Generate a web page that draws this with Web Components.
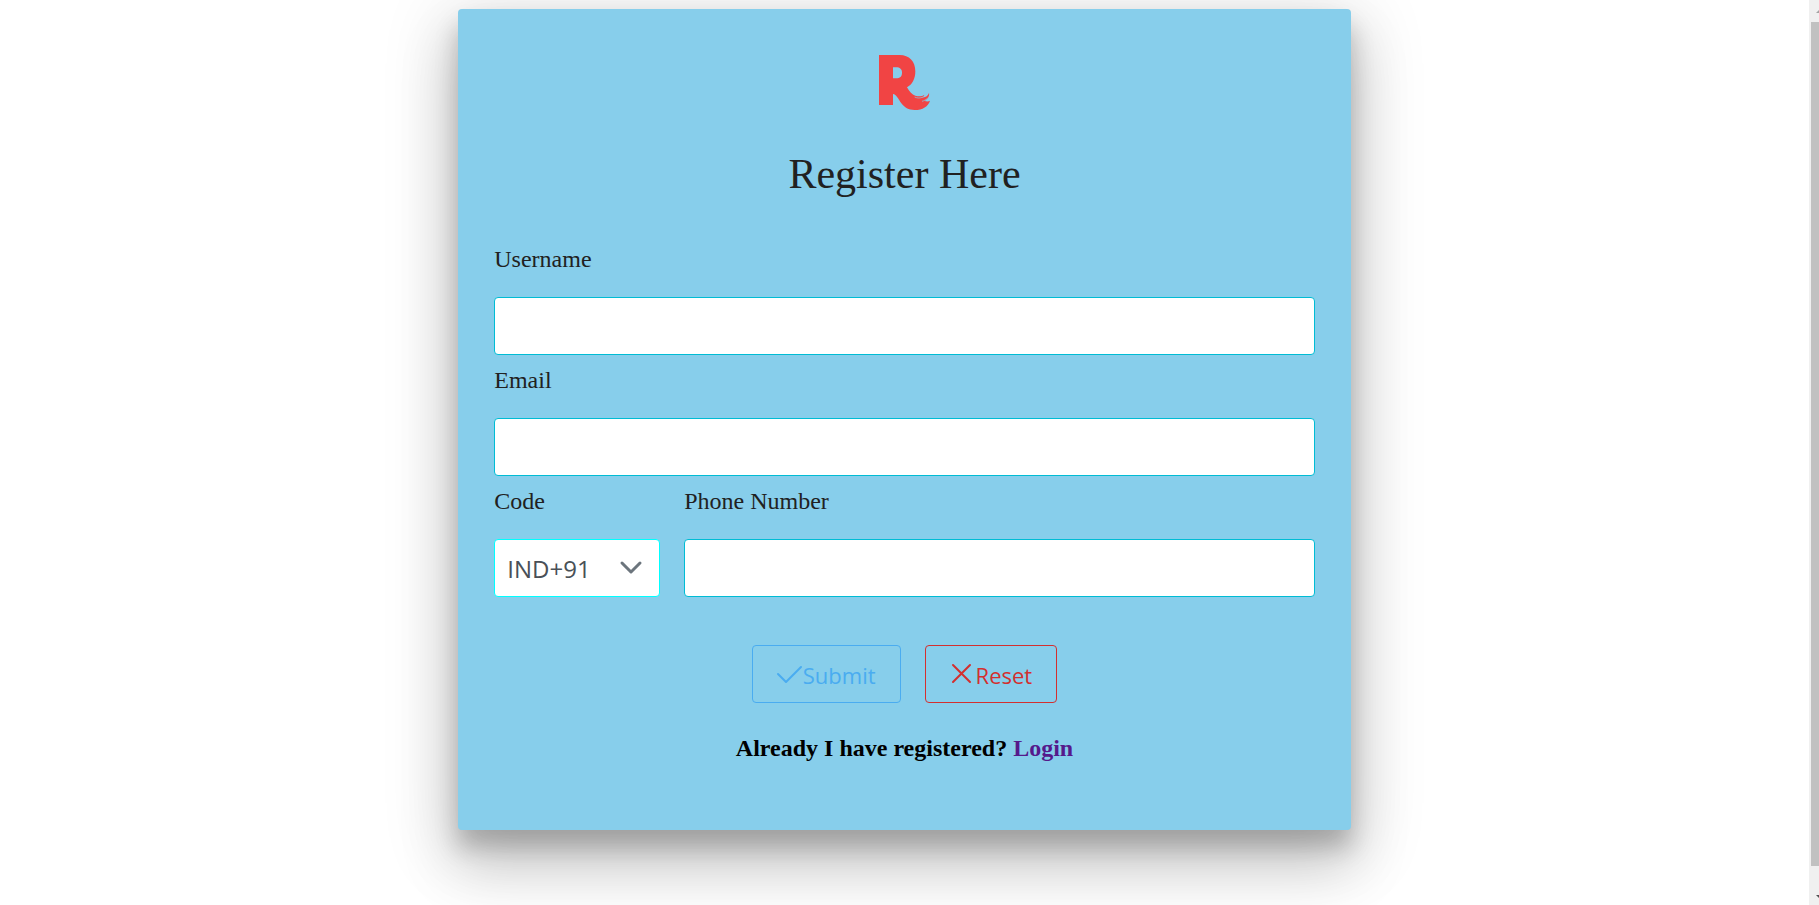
<!DOCTYPE html>
<html lang="en">
<head>
<meta charset="utf-8">
<title>Register</title>
<style>
body { margin: 0; background: #fff; font-family: "Liberation Serif", "Times New Roman", serif; }
</style>
</head>
<body>
<page-shell>
  <register-card heading="Register Here">
    <brand-logo slot="logo"></brand-logo>
    <text-field label="Username" type="text"></text-field>
    <text-field label="Email" type="email"></text-field>
    <field-row>
      <code-select label="Code"></code-select>
      <text-field label="Phone Number" type="tel"></text-field>
    </field-row>
    <action-button slot="actions" icon="check" disabled>Submit</action-button>
    <action-button slot="actions" icon="times">Reset</action-button>
    <login-prompt slot="footer"></login-prompt>
  </register-card>
</page-shell>
<script>
class BaseElement extends HTMLElement {
  connectedCallback() {
    if (this.shadowRoot) return;
    this.attachShadow({ mode: "open" }).innerHTML =
      `<style>:host,*{box-sizing:border-box}${this.styles()}</style>${this.markup()}`;
  }
}

const fieldStyles = `
  :host { display: block; min-width: 0; }
  label { display: block; margin-bottom: 24px; font-size: 24px; line-height: 27px; color: #212121; white-space: nowrap; }
  input, select { display: block; width: 100%; height: 58px; margin: 0; padding: 0 12px; border: 1px solid #00bcd4;
    border-radius: 4px; background: #fff; color: #495057; outline: none;
    font: 24px "Open Sans", "Noto Sans", sans-serif; }
`;

customElements.define("page-shell", class extends BaseElement {
  styles() { return `
    :host { display: flex; align-items: flex-start; }
    main { flex: 1; min-width: 0; min-height: 100vh; padding: 9px 12px 12px; overflow: hidden; }
  `; }
  markup() { return `<main><slot></slot></main><scroll-rail></scroll-rail>`; }
});

customElements.define("scroll-rail", class extends BaseElement {
  styles() { return `
    :host { display: flex; flex-direction: column; flex: none; position: sticky; top: 0; width: 10px; height: 100vh;
      background: #f0f0f0; overflow: hidden; }
    svg { flex: none; display: block; width: 10px; height: 22px; }
    .track { flex: 1; padding-left: 2px; }
    .thumb { height: 98%; background: #c1c1c1; }
  `; }
  markup() { return `
    <svg viewBox="0 0 10 22" aria-hidden="true"><path d="M7 13L11 9V13Z" fill="#a3a3a3"/></svg>
    <div class="track"><div class="thumb"></div></div>
    <svg viewBox="0 0 10 22" aria-hidden="true"><path d="M7 12H11V16Z" fill="#505050"/></svg>
  `; }
});

customElements.define("register-card", class extends BaseElement {
  styles() { return `
    :host { display: block; width: 50%; min-width: 480px; margin: 0 auto; padding: 36px 36px 68px; border-radius: 4px;
      background: #87ceeb;
      box-shadow: 0 14px 69px 12px rgba(0,0,0,.12), 0 36px 57px 5px rgba(0,0,0,.14), 0 17px 23px rgba(0,0,0,.2); }
    .logo { display: flex; justify-content: center; }
    h1 { margin: 30px 0 48px; font-size: 42px; line-height: 48px; font-weight: 400; text-align: center; color: #212121; }
    .fields { display: grid; gap: 12px; }
    .actions { display: flex; justify-content: center; gap: 24px; margin: 48px 0 32px; }
  `; }
  markup() { return `
    <form>
      <div class="logo"><slot name="logo"></slot></div>
      <h1>${this.getAttribute("heading")}</h1>
      <div class="fields"><slot></slot></div>
      <div class="actions"><slot name="actions"></slot></div>
      <slot name="footer"></slot>
    </form>
  `; }
});

customElements.define("brand-logo", class extends BaseElement {
  styles() { return `:host { display: block; } svg { display: block; width: 90px; height: 75px; }`; }
  markup() { return `
    <svg viewBox="0 15 270 225" role="img" aria-label="R logo">
      <path fill="#f14444" fill-rule="evenodd" d="M57 45H119C148 45 166 64 166 94C166 116 157 134 141 142C147 154 156 164 166 167C177 170 187 169 193 164C192 168 189 171 185 173C196 173 204 168 207 159C209 168 203 177 194 183C200 185 206 185 210 182C205 199 188 210 164 210C145 210 134 203 124 190C115 177 109 163 99 162V195H57ZM99 82V115H108C120 115 126 109 126 98C126 88 120 82 108 82Z"/>
      <path fill="none" stroke="#87ceeb" stroke-width="2" d="M164 171C172 175 181 175 189 171M186 184C193 182 198 179 203 174"/>
    </svg>
  `; }
});

customElements.define("field-row", class extends BaseElement {
  styles() { return `:host { display: grid; grid-template-columns: 5fr 19fr; gap: 24px; }`; }
  markup() { return `<slot></slot>`; }
});

customElements.define("text-field", class extends BaseElement {
  styles() { return fieldStyles; }
  markup() { return `
    <label for="control">${this.getAttribute("label")}</label>
    <input id="control" type="${this.getAttribute("type")}">
  `; }
});

customElements.define("code-select", class extends BaseElement {
  styles() { return fieldStyles + `
    .box { display: grid; align-items: center; }
    .box > * { grid-area: 1 / 1; }
    select { appearance: none; border-color: #0ff; }
    svg { justify-self: end; width: 24px; height: 24px; margin-right: 17px; pointer-events: none; }
  `; }
  markup() { return `
    <label for="control">${this.getAttribute("label")}</label>
    <div class="box">
      <select id="control"><option>IND+91</option></select>
      <svg viewBox="0 0 24 24" fill="none" stroke="#6c757d" stroke-width="3" stroke-linecap="round" stroke-linejoin="round" aria-hidden="true"><path d="M3 7L12 16L21 7"/></svg>
    </div>
  `; }
});

const icons = {
  check: `<path d="M1 12L9 20L24 5"/>`,
  times: `<path d="M3 3L20 20M20 3L3 20"/>`
};

customElements.define("action-button", class extends BaseElement {
  styles() { return `
    :host { display: block; color: #d32f2f; }
    :host([disabled]) { color: #4aacf0; }
    button { display: flex; align-items: center; gap: 2px; height: 58px; margin: 0; padding: 0 24px; border: 1px solid currentColor;
      border-radius: 4px; background: none; color: inherit; font: 22px "Open Sans", "Noto Sans", sans-serif; }
    svg { width: 24px; height: 24px; flex: none; overflow: visible; }
    span { padding-top: 2px; }
  `; }
  markup() { return `
    <button type="button" ${this.hasAttribute("disabled") ? "disabled" : ""}>
      <svg viewBox="0 0 24 24" fill="none" stroke="currentColor" stroke-width="2" stroke-linecap="round" stroke-linejoin="round" aria-hidden="true">${icons[this.getAttribute("icon")]}</svg><span><slot></slot></span>
    </button>
  `; }
});

customElements.define("login-prompt", class extends BaseElement {
  styles() { return `
    :host { display: block; text-align: center; font-size: 24px; line-height: 27px; font-weight: 700; color: #000; }
    a { color: #551a8b; text-decoration: none; }
  `; }
  markup() { return `Already I have registered? <a href="#login">Login</a>`; }
});
</script>
</body>
</html>
